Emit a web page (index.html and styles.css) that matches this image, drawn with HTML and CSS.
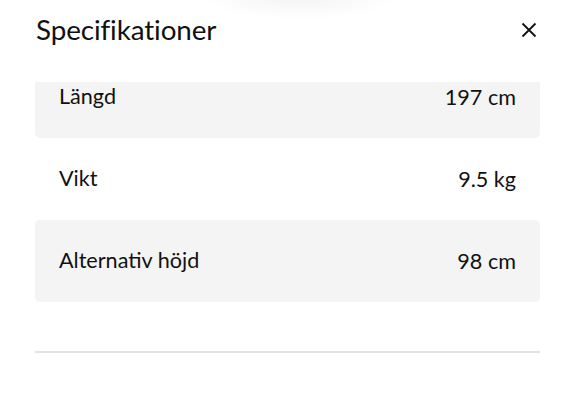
FILE: index.html
```html
<!DOCTYPE html>
<html lang="sv">
<head>
<meta charset="utf-8">
<link rel="stylesheet" href="styles.css">
</head>
<body>
<div class="sheet">
  <div class="handle-shadow"></div>
  <header class="head">
    <h1 class="title">Specifikationer</h1>
    <button class="close" aria-label="Stäng">
      <svg width="16" height="16" viewBox="0 0 16 16"><path d="M1.5 1.5 L14.5 14.5 M14.5 1.5 L1.5 14.5" stroke="#111" stroke-width="1.8" fill="none"/></svg>
    </button>
  </header>
  <main class="scroll">
    <div class="content">
      <div class="spec-list">
        <div class="spec shaded"><span>Längd</span><span>197 cm</span></div>
        <div class="spec"><span>Vikt</span><span>9.5 kg</span></div>
        <div class="spec shaded"><span>Alternativ höjd</span><span>98 cm</span></div>
      </div>
      <hr class="divider">
      <h2 class="section">Skötsel</h2>
    </div>
  </main>
</div>
</body>
</html>
```
FILE: styles.css
```css
html, body {
  margin: 0;
  padding: 0;
  background: #fff;
}
body {
  font-family: Lato, "Open Sans", sans-serif;
  color: #111;
  width: 575px;
  height: 409px;
  overflow: hidden;
}
.sheet {
  position: relative;
  height: 409px;
  display: flex;
  flex-direction: column;
}
.handle-shadow {
  position: absolute;
  left: 200px;
  top: -30px;
  width: 200px;
  height: 50px;
  border-radius: 50%;
  background: radial-gradient(ellipse at center, rgba(0,0,0,0.05), rgba(0,0,0,0) 70%);
  pointer-events: none;
}
.head {
  height: 82px;
  flex: none;
  display: flex;
  justify-content: space-between;
  align-items: flex-start;
  padding: 0 38px 0 36px;
  box-sizing: border-box;
}
.title {
  margin: 13px 0 0;
  font-size: 27.8px;
  font-weight: 400;
  letter-spacing: -0.1px;
  line-height: 34px;
}
.close {
  margin-top: 22px;
  border: 0;
  background: none;
  padding: 0;
  width: 16px;
  height: 16px;
  cursor: pointer;
}
.scroll {
  flex: 1;
  overflow: hidden;
}
.content {
  margin-top: -26px;
  padding: 0 35px 0 35px;
}
.spec-list {
  display: flex;
  flex-direction: column;
}
.spec {
  height: 82px;
  display: flex;
  align-items: center;
  justify-content: space-between;
  padding: 0 24px;
  border-radius: 5px;
  font-size: 21.6px;
  line-height: 26px;
}
.spec span:first-child {
  margin-top: -2px;
}
.spec.shaded {
  background: #f4f4f4;
}
.divider {
  margin: 49px 0 0;
  border: 0;
  height: 2px;
  background: #e2e2e2;
}
.section {
  margin: 51px 0 0 24px;
  font-size: 21.6px;
  font-weight: 400;
}
```
